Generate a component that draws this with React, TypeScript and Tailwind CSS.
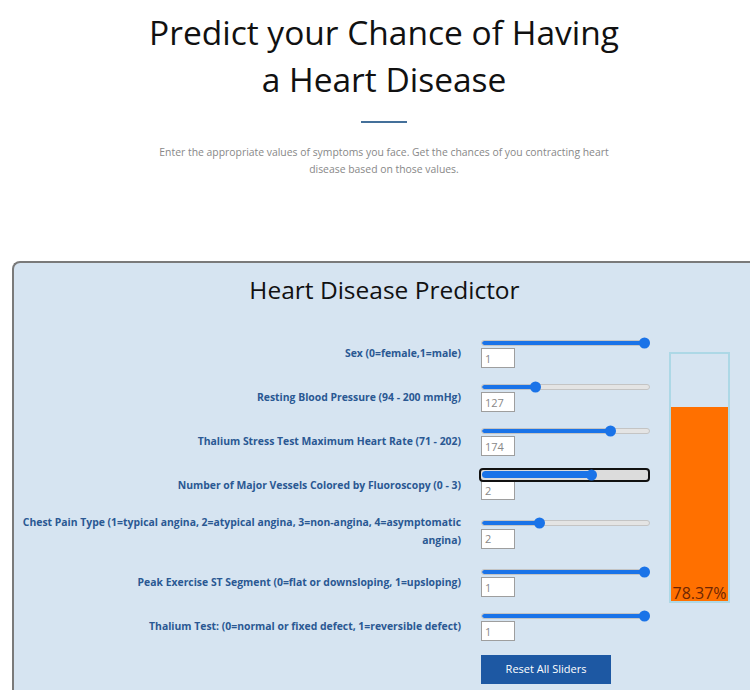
import { useState } from "react";

type Field = {
  key: string;
  label: string;
  min: number;
  max: number;
  initial: number;
};

const FIELDS: Field[] = [
  { key: "sex", label: "Sex (0=female,1=male)", min: 0, max: 1, initial: 1 },
  { key: "trestbps", label: "Resting Blood Pressure (94 - 200 mmHg)", min: 94, max: 200, initial: 127 },
  { key: "thalach", label: "Thalium Stress Test Maximum Heart Rate (71 - 202)", min: 71, max: 202, initial: 174 },
  { key: "ca", label: "Number of Major Vessels Colored by Fluoroscopy (0 - 3)", min: 0, max: 3, initial: 2 },
  {
    key: "cp",
    label: "Chest Pain Type (1=typical angina, 2=atypical angina, 3=non-angina, 4=asymptomatic angina)",
    min: 1,
    max: 4,
    initial: 2,
  },
  { key: "slope", label: "Peak Exercise ST Segment (0=flat or downsloping, 1=upsloping)", min: 0, max: 1, initial: 1 },
  { key: "thal", label: "Thalium Test: (0=normal or fixed defect, 1=reversible defect)", min: 0, max: 1, initial: 1 },
];

const TRACK_W = 169;
const THUMB = 11;

function Slider({ value, min, max, focused }: { value: number; min: number; max: number; focused?: boolean }) {
  const frac = (value - min) / (max - min);
  const center = THUMB / 2 + frac * (TRACK_W - THUMB);
  return (
    <div className="relative flex h-[11px] w-[169px] items-center">
      {focused ? (
        // keyboard focus ring drawn around the track
        <div className="-ml-[2px] flex h-[14px] w-[173px] items-center rounded-[4px] border-2 border-[#111] bg-[#dcdcdc] px-[1px]">
          <div className="h-[7px] rounded-full bg-[#1a73e8]" style={{ width: center }} />
        </div>
      ) : (
        <div className="h-[6px] w-full overflow-hidden rounded-full border border-[#c4c4c4] bg-[#e4e4e4]">
          <div className="h-full rounded-full bg-[#1a73e8]" style={{ width: center }} />
        </div>
      )}
      <div
        className="absolute top-1/2 h-[11px] w-[11px] -translate-y-1/2 rounded-full bg-[#1a73e8]"
        style={{ left: center - THUMB / 2 }}
      />
    </div>
  );
}

export default function App() {
  const [values, setValues] = useState<Record<string, number>>(() =>
    Object.fromEntries(FIELDS.map((f) => [f.key, f.initial]))
  );
  const chance = 78.37;

  const reset = () => setValues(Object.fromEntries(FIELDS.map((f) => [f.key, f.initial])));

  return (
    <div className="min-h-[690px] w-[750px] overflow-hidden bg-white font-['Open_Sans',sans-serif]">
      <div className="flex flex-col items-center pl-[18px] pt-[9px]">
        <h1 className="text-center text-[33.5px] font-medium leading-[47px] text-[#111]">
          Predict your Chance of Having
          <br />a Heart Disease
        </h1>
        <div className="mt-[18px] h-[2px] w-[46px] bg-[#44709a]" />
        <p className="mt-[21px] w-[470px] text-center text-[10.4px] leading-[17px] text-[#888]">
          Enter the appropriate values of symptoms you face. Get the chances of you contracting heart disease based on
          those values.
        </p>
      </div>

      <div className="ml-[12px] mt-[83px] w-[745px] rounded-tl-[8px] border-2 border-r-0 border-[#7a7a7a] bg-[#d6e4f1] pb-[20px] pl-[6px] pt-[11px]">
        <h2 className="pr-[8px] text-center text-[24.5px] font-medium leading-[32px] text-[#111]">
          Heart Disease Predictor
        </h2>

        <div className="mt-[31px] flex items-start">
          <div className="grid grid-cols-[441px_169px] gap-x-[20px] gap-y-[13px]">
            {FIELDS.map((f, i) => (
              <div key={f.key} className="contents">
                <div
                  className={
                    "flex items-center justify-end text-right text-[10.4px] font-bold leading-[18px] text-[#2a5893]" +
                    (f.key === "cp" ? " pb-[4px]" : "")
                  }
                >
                  {f.label}
                </div>
                <div className="flex flex-col justify-center">
                  <Slider value={values[f.key]} min={f.min} max={f.max} focused={i === 3} />
                  <input
                    type="text"
                    value={values[f.key]}
                    onChange={(e) => {
                      const n = Number(e.target.value);
                      if (!Number.isNaN(n)) setValues((v) => ({ ...v, [f.key]: n }));
                    }}
                    className="h-[20px] w-[34px] border border-[#9e9e9e] bg-white pl-[3px] text-[11px] text-[#888] outline-none"
                  />
                </div>
              </div>
            ))}
            <div />
            <button
              type="button"
              onClick={reset}
              className="mt-[1px] h-[29px] w-[130px] bg-[#1d58a3] text-[11px] text-white"
            >
              Reset All Sliders
            </button>
          </div>

          <div className="ml-[19px] mt-[15px] flex h-[251px] w-[61px] flex-col justify-end border-2 border-[#add8e6] bg-[#d6e4f1]">
            <div
              className="flex items-end justify-center bg-[#ff7000] text-[16px] leading-[15px] text-[#6e2604]"
              style={{ height: `${chance}%` }}
            >
              {chance}%
            </div>
          </div>
        </div>
      </div>
    </div>
  );
}
